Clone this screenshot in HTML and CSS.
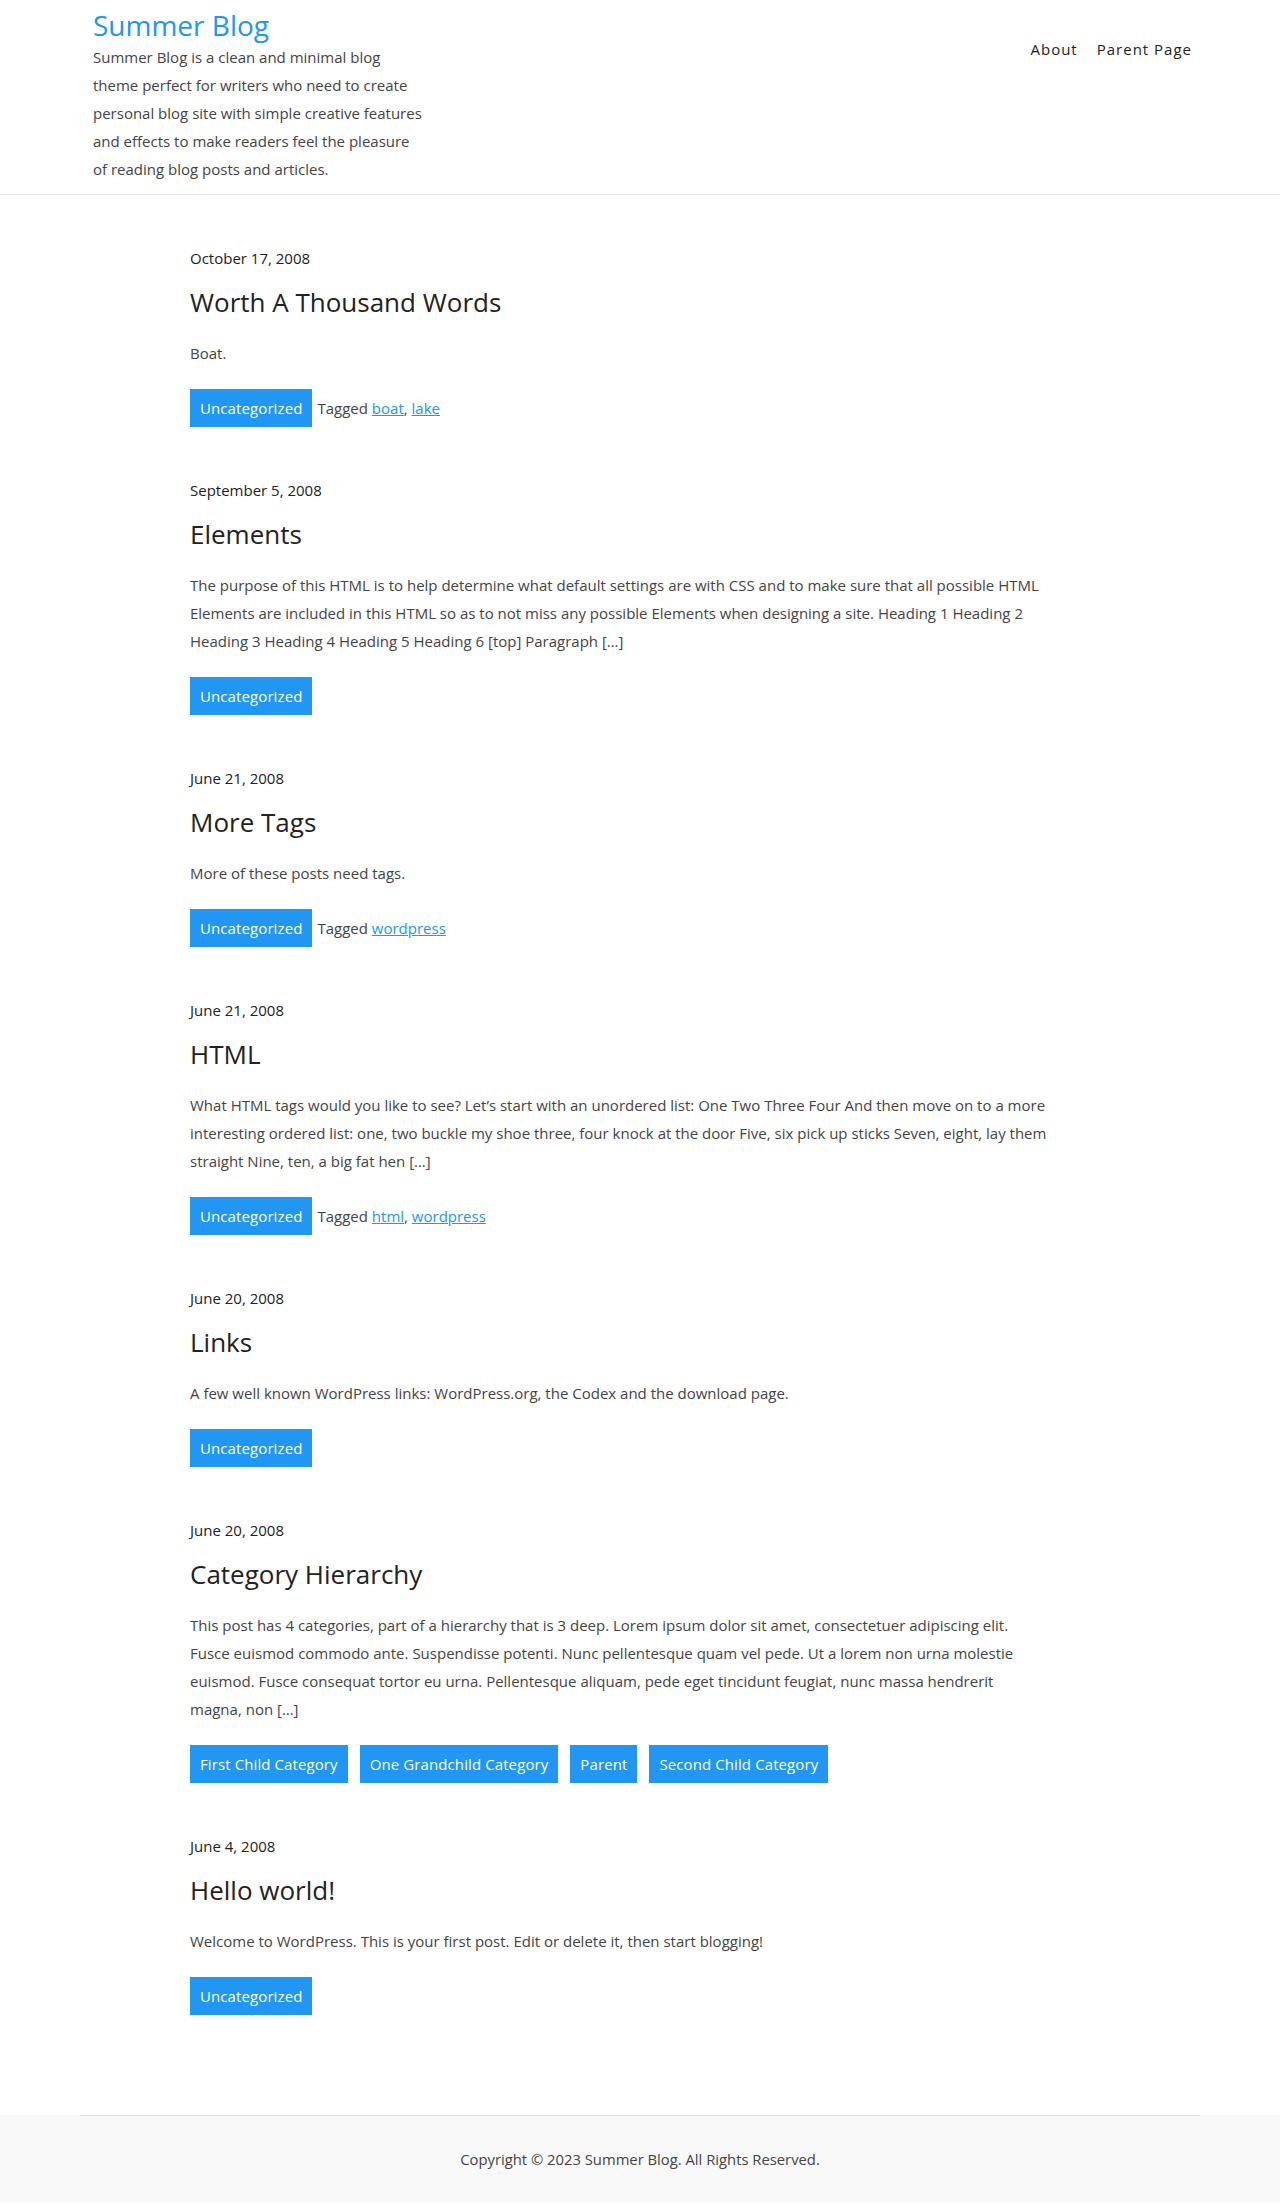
FILE: index.html
```html
<!DOCTYPE html>
<html lang="en">
<head>
<meta charset="utf-8">
<title>Summer Blog</title>
<link rel="stylesheet" href="styles.css">
</head>
<body>
<header class="site-header">
  <div class="header-inner">
    <div class="branding">
      <a class="site-title" href="#">Summer Blog</a>
      <p class="site-desc">Summer Blog is a clean and minimal blog<br>theme perfect for writers who need to create<br>personal blog site with simple creative features<br>and effects to make readers feel the pleasure<br>of reading blog posts and articles.</p>
    </div>
    <nav class="main-nav">
      <a href="#">About</a>
      <a href="#">Parent Page</a>
    </nav>
  </div>
</header>

<main class="site-main">
  <div class="posts">
    <article class="post">
      <div class="post-date">October 17, 2008</div>
      <h2 class="post-title">Worth A Thousand Words</h2>
      <p class="post-excerpt">Boat.</p>
      <div class="post-meta">
        <div class="cats"><a class="cat" href="#">Uncategorized</a></div>
        <span class="tags">Tagged <a href="#">boat</a>, <a href="#">lake</a></span>
      </div>
    </article>

    <article class="post">
      <div class="post-date">September 5, 2008</div>
      <h2 class="post-title">Elements</h2>
      <p class="post-excerpt">The purpose of this HTML is to help determine what default settings are with CSS and to make sure that all possible HTML Elements are included in this HTML so as to not miss any possible Elements when designing a site. Heading 1 Heading 2 Heading 3 Heading 4 Heading 5 Heading 6 [top] Paragraph […]</p>
      <div class="post-meta">
        <div class="cats"><a class="cat" href="#">Uncategorized</a></div>
      </div>
    </article>

    <article class="post">
      <div class="post-date">June 21, 2008</div>
      <h2 class="post-title">More Tags</h2>
      <p class="post-excerpt">More of these posts need tags.</p>
      <div class="post-meta">
        <div class="cats"><a class="cat" href="#">Uncategorized</a></div>
        <span class="tags">Tagged <a href="#">wordpress</a></span>
      </div>
    </article>

    <article class="post">
      <div class="post-date">June 21, 2008</div>
      <h2 class="post-title">HTML</h2>
      <p class="post-excerpt">What HTML tags would you like to see? Let’s start with an unordered list: One Two Three Four And then move on to a more interesting ordered list: one, two buckle my shoe three, four knock at the door Five, six pick up sticks Seven, eight, lay them straight Nine, ten, a big fat hen […]</p>
      <div class="post-meta">
        <div class="cats"><a class="cat" href="#">Uncategorized</a></div>
        <span class="tags">Tagged <a href="#">html</a>, <a href="#">wordpress</a></span>
      </div>
    </article>

    <article class="post">
      <div class="post-date">June 20, 2008</div>
      <h2 class="post-title">Links</h2>
      <p class="post-excerpt">A few well known WordPress links: WordPress.org, the Codex and the download page.</p>
      <div class="post-meta">
        <div class="cats"><a class="cat" href="#">Uncategorized</a></div>
      </div>
    </article>

    <article class="post">
      <div class="post-date">June 20, 2008</div>
      <h2 class="post-title">Category Hierarchy</h2>
      <p class="post-excerpt">This post has 4 categories, part of a hierarchy that is 3 deep. Lorem ipsum dolor sit amet, consectetuer adipiscing elit. Fusce euismod commodo ante. Suspendisse potenti. Nunc pellentesque quam vel pede. Ut a lorem non urna molestie euismod. Fusce consequat tortor eu urna. Pellentesque aliquam, pede eget tincidunt feugiat, nunc massa hendrerit magna,&nbsp;non […]</p>
      <div class="post-meta">
        <div class="cats">
          <a class="cat" href="#">First Child Category</a>
          <a class="cat" href="#">One Grandchild Category</a>
          <a class="cat" href="#">Parent</a>
          <a class="cat" href="#">Second Child Category</a>
        </div>
      </div>
    </article>

    <article class="post">
      <div class="post-date">June 4, 2008</div>
      <h2 class="post-title">Hello world!</h2>
      <p class="post-excerpt">Welcome to WordPress. This is your first post. Edit or delete it, then start blogging!</p>
      <div class="post-meta">
        <div class="cats"><a class="cat" href="#">Uncategorized</a></div>
      </div>
    </article>
  </div>
</main>

<footer class="site-footer">
  <div class="footer-inner">
    <p class="copyright">Copyright © 2023 Summer Blog. All Rights Reserved.</p>
  </div>
</footer>
</body>
</html>
```

FILE: styles.css
```css
* {
  box-sizing: border-box;
}

body {
  margin: 0;
  font-family: "Open Sans", "Liberation Sans", sans-serif;
  font-size: 15px;
  line-height: 28px;
  color: #444;
  background: #fff;
}

a {
  text-decoration: none;
}

/* Header */
.site-header {
  border-bottom: 1px solid #e8e8e8;
}

.header-inner {
  max-width: 1120px;
  margin: 0 auto;
  padding: 7px 8px 11px 13px;
  display: flex;
  justify-content: space-between;
  align-items: flex-start;
}

.branding {
  width: 360px;
}

.site-title {
  display: block;
  font-size: 28px;
  line-height: 36px;
  color: #2196f3;
  font-weight: 400;
}

.site-desc {
  margin: 0;
  font-size: 15px;
  line-height: 28px;
  color: #444;
}

.main-nav {
  display: flex;
  gap: 19px;
  padding-top: 28px;
}

.main-nav a {
  font-size: 15px;
  line-height: 28px;
  font-weight: 500;
  letter-spacing: 1px;
  color: #222;
}

/* Main */
.site-main {
  max-width: 1120px;
  margin: 0 auto;
  padding: 49px 0 100px;
}

.posts {
  width: 860px;
  margin-left: 110px;
}

.post + .post {
  margin-top: 49px;
}

.post-date {
  font-size: 15px;
  line-height: 28px;
  color: #222;
}

.post-title {
  margin: 13px 0 0;
  font-size: 26px;
  line-height: 34px;
  font-weight: 500;
  color: #222;
}

.post-excerpt {
  margin: 20px 0 0;
  color: #444;
}

.post-meta {
  margin-top: 22px;
  display: flex;
  align-items: center;
}

.cats {
  display: flex;
  gap: 12px;
}

.cat {
  display: block;
  padding: 5px 10px;
  line-height: 28px;
  background: #2196f3;
  color: #fff;
  font-size: 15px;
  letter-spacing: 0.1px;
}

.tags {
  margin-left: 5px;
  color: #444;
}

.tags a {
  color: #2196f3;
  text-decoration: underline;
}

/* Footer */
.site-footer {
  background: #f9f9f9;
}

.footer-inner {
  max-width: 1120px;
  margin: 0 auto;
  border-top: 1px solid #ddd;
  padding: 31px 0 32px;
}

.copyright {
  margin: 0;
  text-align: center;
  font-size: 14.8px;
  line-height: 24px;
  color: #444;
}
```
